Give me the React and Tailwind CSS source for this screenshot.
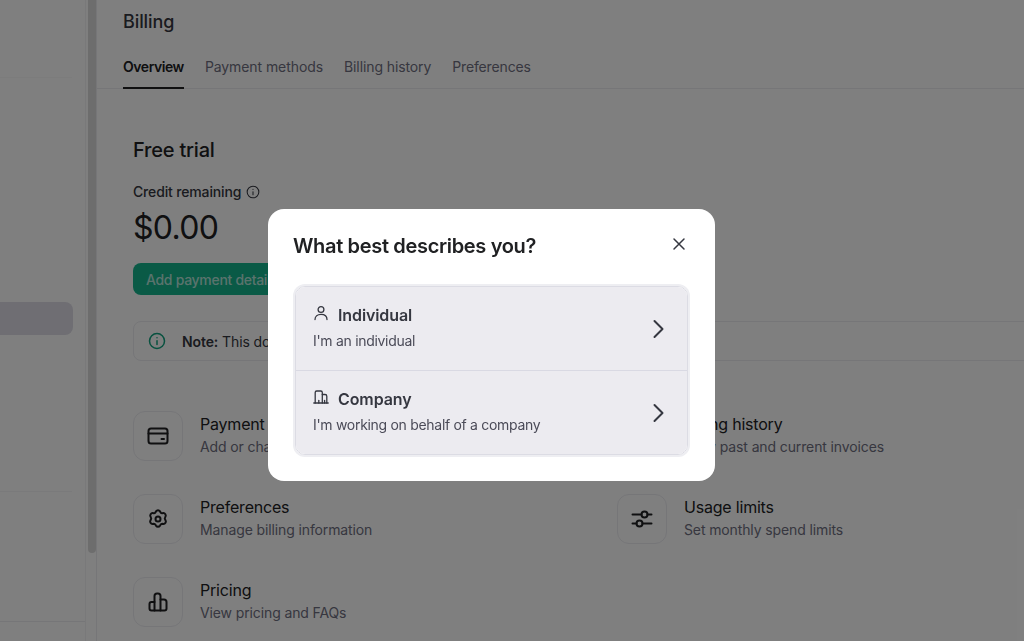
const font = { fontFamily: '"Inter", "Liberation Sans", sans-serif' };

function Svg({ size = 24, className = "", sw = 2, children }) {
  return (
    <svg width={size} height={size} viewBox="0 0 24 24" fill="none" stroke="currentColor" strokeWidth={sw} strokeLinecap="round" strokeLinejoin="round" className={className}>
      {children}
    </svg>
  );
}

const CardIcon = () => (
  <Svg>
    <rect x="2.5" y="4.5" width="19" height="15" rx="2.5" />
    <path d="M2.5 9.5h19" />
    <path d="M15.5 15h2.5" />
  </Svg>
);
const GearIcon = () => (
  <Svg>
    <path d="M10 2.900a2.400 2.400 0 0 1 4 0l.5.8a2 2 0 0 0 1.800 1l.9-.1a2.400 2.400 0 0 1 2.300 3.500l-.4.8a2 2 0 0 0 0 2.100l.5.900a2.400 2.400 0 0 1-2.200 3.500l-1.100-.1a2 2 0 0 0-1.800 1l-.5.800a2.400 2.400 0 0 1-4 0l-.5-.8a2 2 0 0 0-1.800-1l-1.100.1a2.400 2.400 0 0 1-2.200-3.500l.5-.9a2 2 0 0 0 0-2.100l-.4-.8a2.400 2.400 0 0 1 2.300-3.500l.9.1a2 2 0 0 0 1.800-1z" transform="translate(0 1.500)" />
    <circle cx="12" cy="12" r="2.500" />
  </Svg>
);
const BarsIcon = () => (
  <Svg>
    <path d="M8.500 12H5.500a2 2 0 0 0-2 2v4.500a2 2 0 0 0 2 2h13a2 2 0 0 0 2-2V12a2.500 2.500 0 0 0-2.500-2.500h-3.500" />
    <path d="M8.500 20.500V6a2.500 2.500 0 0 1 2.500-2.500h1A2.500 2.500 0 0 1 14.500 6v14.500" />
  </Svg>
);
const SlidersIcon = () => (
  <Svg>
    <path d="M2.500 7.500h9" />
    <circle cx="14.500" cy="7.500" r="3" />
    <path d="M17.500 7.500h4" />
    <path d="M2.500 16.500h4" />
    <circle cx="9.500" cy="16.500" r="3" />
    <path d="M12.500 16.500h9" />
  </Svg>
);
const InvoiceIcon = () => (
  <Svg>
    <rect x="4" y="3" width="16" height="18" rx="2" />
    <path d="M8 8h8M8 12h8" />
  </Svg>
);
const PersonIcon = () => (
  <svg width="16" height="16" viewBox="0 0 16 16" fill="none" stroke="currentColor" strokeWidth="1.300" strokeLinecap="round" className="-mt-[4px] shrink-0">
    <circle cx="8" cy="4.500" r="2.900" />
    <path d="M2 14.500c0-3.300 2.600-5.200 6-5.200s6 1.900 6 5.200" />
  </svg>
);
const BuildingIcon = () => (
  <svg width="16" height="16" viewBox="0 0 16 16" fill="none" stroke="currentColor" strokeWidth="1.300" strokeLinecap="round" strokeLinejoin="round" className="-mt-[4px] shrink-0">
    <path d="M.8 14h14.400" />
    <path d="M2.200 14V3.500a1.500 1.500 0 0 1 1.500-1.500h4.100a1.500 1.500 0 0 1 1.500 1.500V14" />
    <path d="M9.300 5.500h2.700a1.800 1.800 0 0 1 1.800 1.800V14" />
    <path d="M5.800 14v-2.500" />
    <path d="M11.600 14v-2.500" />
  </svg>
);
const InfoIcon = ({ size, sw, className }) => (
  <Svg size={size} sw={sw} className={className}>
    <circle cx="12" cy="12" r="10" />
    <path d="M12 11.500v5" />
    <path d="M12 7.500v.01" />
  </Svg>
);
const Chevron = () => (
  <Svg size={24} sw={2} className="text-[#353740] shrink-0">
    <path d="M8.500 4 16.500 12l-8 8" />
  </Svg>
);

function Feature({ icon, title, sub }) {
  return (
    <div className="flex items-center gap-[17px] h-[50px]">
      <div className="w-[50px] h-[50px] shrink-0 rounded-xl border border-[#ececf1] flex items-center justify-center text-[#202123]">
        {icon}
      </div>
      <div className="whitespace-nowrap pb-[2px]">
        <div className="text-[16px] leading-[23px] tracking-[-0.2px] text-[#202123]">{title}</div>
        <div className="text-[14px] leading-[22px] tracking-[-0.12px] text-[#6e6e80]">{sub}</div>
      </div>
    </div>
  );
}

function Option({ icon, title, sub }) {
  return (
    <div className="flex items-center justify-between pl-[17px] pr-[17px] h-[83px] bg-[#ecebf0]">
      <div className="pb-[3px]">
        <div className="flex items-center gap-[9px] text-[#353740]">
          {icon}
          <span className="text-[16px] leading-[24px] font-semibold tracking-[-0.1px]">{title}</span>
        </div>
        <div className="text-[14px] leading-[20px] tracking-[-0.3px] mt-[4px] text-[#4b4b58]">{sub}</div>
      </div>
      <Chevron />
    </div>
  );
}

export default function App() {
  return (
    <div style={font} className="relative w-[1024px] h-[641px] overflow-hidden bg-white flex antialiased">
      <aside className="w-[97px] h-full shrink-0 flex">
        <div className="w-[86px] h-full flex flex-col border-r border-[#f3f3f5]">
          <div className="h-[78px] border-b border-[#f8f8f9] mr-[13px] shrink-0" />
          <div className="h-[224px] shrink-0" />
          <div className="h-[33px] w-[73px] rounded-r-lg bg-[#dedde6] shrink-0" />
          <div className="h-[157px] border-b border-[#f4f4f6] mr-[13px] shrink-0" />
          <div className="h-[130px] border-b border-[#ececf1] shrink-0" />
        </div>
        <div className="w-[11px] h-full border-r border-[#ececf1] pl-[2px] pr-[1px]">
          <div className="w-[8px] h-[553px] bg-[#dadada] rounded-b" />
        </div>
      </aside>

      <main className="flex-1 min-w-0">
        <h1 className="pl-[26px] pt-[10px] text-[18px] leading-[24px] font-medium tracking-[-0.1px] text-[#353740]">Billing</h1>
        <nav className="mt-[21px] pl-[26px] h-[34px] border-b border-[#ececf1] flex gap-[21px] text-[14px]">
          <div className="h-[34px] border-b-2 border-[#202123] font-semibold tracking-[-0.45px] text-[#202123] leading-[24px]">Overview</div>
          <div className="text-[#6e6e80] leading-[24px] tracking-[-0.08px]">Payment methods</div>
          <div className="text-[#6e6e80] leading-[24px] tracking-[-0.1px]">Billing history</div>
          <div className="text-[#6e6e80] leading-[24px] tracking-[-0.15px]">Preferences</div>
        </nav>

        <section className="pl-[36px] pt-[47px]">
          <h2 className="text-[20px] leading-[28px] font-medium tracking-[-0.2px] text-[#202123]">Free trial</h2>
          <div className="mt-[18px] flex items-center gap-[5px] text-[14px] leading-[20px] font-medium tracking-[-0.15px] text-[#353740]">
            Credit remaining
            <InfoIcon size={14} sw={1.800} className="text-[#353740]" />
          </div>
          <div className="mt-[4px] text-[32px] leading-[44px] tracking-[-0.7px] text-[#202123]">$0.00</div>
          <button className="mt-[13px] h-[32px] w-[190px] rounded-lg bg-[#14b48d] text-white/70 text-[14px] font-medium tracking-[-0.3px] text-left pl-[13px] whitespace-nowrap">
            Add payment details
          </button>
          <div className="mt-[26px] h-[40px] -mr-[20px] rounded-l-lg border border-[#ececf1] flex items-center pl-[14px] gap-[16px] text-[14px] tracking-[-0.1px] text-[#353740]">
            <InfoIcon size={18} sw={2} className="text-[#10a37f] shrink-0" />
            <span className="whitespace-nowrap"><b className="font-semibold">Note:</b> This does not upgrade</span>
          </div>
          <div className="mt-[50px] grid grid-cols-[484px_1fr] gap-y-[33px]">
            <Feature icon={<CardIcon />} title="Payment methods" sub="Add or change payment method" />
            <Feature icon={<InvoiceIcon />} title="Billing history" sub="View past and current invoices" />
            <Feature icon={<GearIcon />} title="Preferences" sub="Manage billing information" />
            <Feature icon={<SlidersIcon />} title="Usage limits" sub="Set monthly spend limits" />
            <Feature icon={<BarsIcon />} title="Pricing" sub="View pricing and FAQs" />
          </div>
        </section>
      </main>

      <div className="absolute inset-0 bg-black/50">
        <div className="absolute left-[268px] top-[209px] w-[447px] h-[272px] bg-white rounded-2xl px-[25px] [will-change:transform]">
          <div className="relative pt-[24px]">
            <h2 className="text-[20px] leading-[26px] font-semibold tracking-[-0.33px] text-[#202123]">What best describes you?</h2>
            <svg width="14" height="14" viewBox="0 0 14 14" fill="none" stroke="#353740" strokeWidth="1.500" strokeLinecap="round" className="absolute right-[4px] top-[28px]">
              <path d="M2 2l10 10M12 2 2 12" />
            </svg>
          </div>
          <div className="mt-[27px] ml-[2px] w-[393px] rounded-[10px] border border-[#dcdce4] ring-2 ring-[#eeeef2] overflow-hidden">
            <Option icon={<PersonIcon />} title="Individual" sub="I'm an individual" />
            <div className="h-px bg-[#d9d9e3]" />
            <Option icon={<BuildingIcon />} title="Company" sub="I'm working on behalf of a company" />
          </div>
        </div>
      </div>
    </div>
  );
}
